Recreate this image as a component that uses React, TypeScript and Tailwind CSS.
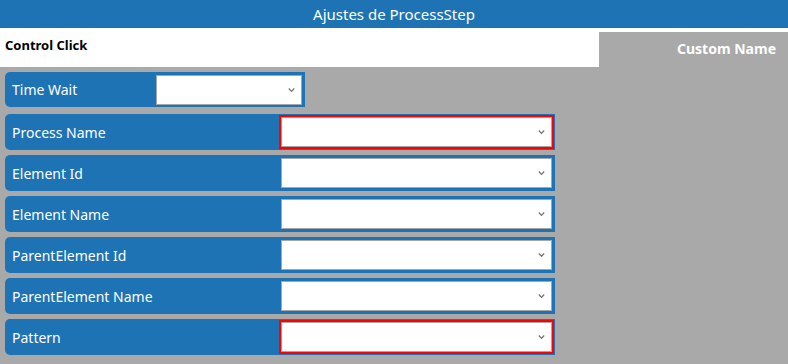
import React from "react";

const Chevron = () => (
  <svg width="7" height="5" viewBox="0 0 7 5" className="absolute right-[6px] top-1/2 -translate-y-1/2">
    <path d="M0.8 1 L3.5 3.8 L6.2 1" fill="none" stroke="#707070" strokeWidth="1.2" />
  </svg>
);

const Select = ({ w, red }: { w: string; red?: boolean }) => (
  <div
    className={`relative h-[30px] bg-white border border-[#a6a6a6] ${w} ${
      red ? "outline-2 outline-[#ff0000] outline-offset-0" : ""
    }`}
  >
    <Chevron />
  </div>
);

const Row = ({ label, red }: { label: string; red?: boolean }) => (
  <div className="flex items-center h-[36px] w-[550px] bg-[#1e73b4] rounded-l-[5px] pl-[7px] pr-[3px]">
    <div className="flex-1 text-white text-[14px]">{label}</div>
    <Select w="w-[271px]" red={red} />
  </div>
);

export default function App() {
  return (
    <div
      className="w-[788px] h-[364px] bg-[#a9a9a9] overflow-hidden"
      style={{ fontFamily: '"Segoe UI", "Noto Sans", "Open Sans", sans-serif' }}
    >
      <div className="h-[28px] bg-[#1e73b4] text-white text-[15px] flex items-center justify-center">
        Ajustes de ProcessStep
      </div>
      <div className="flex h-[39px]">
        <div className="flex-1 bg-white pl-[5px] pt-[8px] text-[13px] font-bold text-black">Control Click</div>
        <div className="w-[189px] bg-[#a9a9a9] border-t-[4px] border-white flex items-start justify-end pr-[12px] pt-[6px] text-[14px] font-bold text-white">
          Custom Name
        </div>
      </div>
      <div className="flex flex-col gap-[5px] px-[5px] pt-[5px]">
        <div className="flex items-center h-[35px] w-[300px] bg-[#1e73b4] rounded-l-[5px] pl-[7px] pr-[3px] mb-[2px]">
          <div className="flex-1 text-white text-[14px]">Time Wait</div>
          <Select w="w-[146px]" />
        </div>
        <Row label="Process Name" red />
        <Row label="Element Id" />
        <Row label="Element Name" />
        <Row label="ParentElement Id" />
        <Row label="ParentElement Name" />
        <Row label="Pattern" red />
      </div>
    </div>
  );
}
